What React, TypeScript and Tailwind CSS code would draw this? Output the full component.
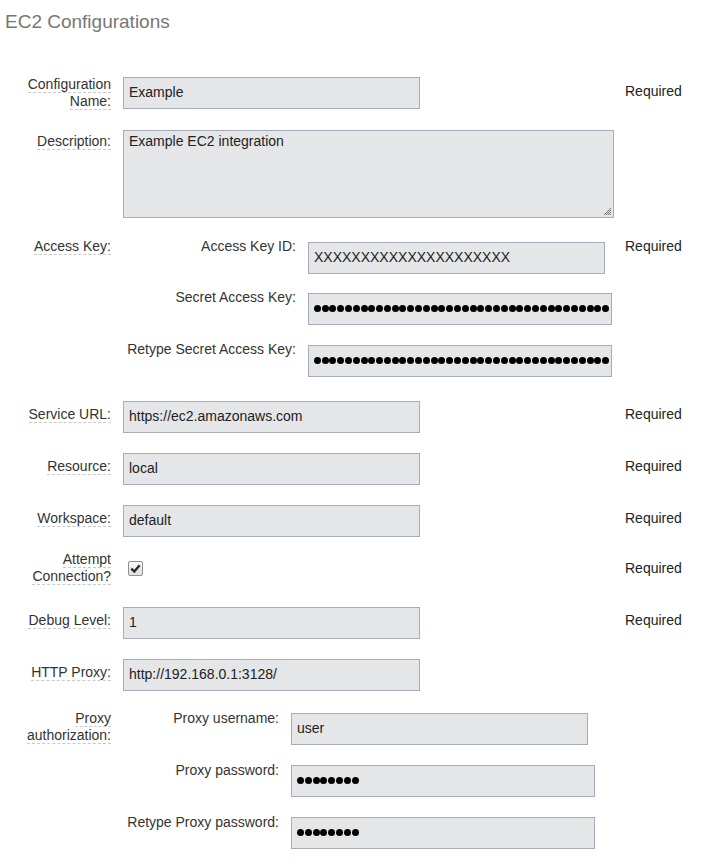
import React from "react";

// label text with dashed underline, one span per line
function Label({ lines }: { lines: string[] }) {
  return (
    <div className="w-[111px] shrink-0 text-right">
      {lines.map((l, i) => (
        <React.Fragment key={l}>
          <span className="border-b border-dashed border-[#c9c9c9]">{l}</span>
          {i < lines.length - 1 && <br />}
        </React.Fragment>
      ))}
    </div>
  );
}

function TextField({ value, width = "w-[297px]" }: { value: string; width?: string }) {
  return (
    <input
      readOnly
      defaultValue={value}
      className={`${width} h-[32px] shrink-0 border border-[#a6acbd] bg-[#e5e6e8] px-[5px] pb-[3px] text-[14px] text-[#222] outline-none`}
    />
  );
}

function PasswordField({ count, fill }: { count: number; fill?: boolean }) {
  return (
    <div className="flex h-[32px] w-[304px] shrink-0 items-center border border-[#a6acbd] bg-[#e5e6e8] pb-[1px] pl-[4px] pr-[1px]">
      <div className={`flex h-[8px] w-full overflow-hidden ${fill ? "justify-end" : "justify-start pl-[1px]"}`}>
        {Array.from({ length: count }).map((_, i) => (
          <span key={i} className="mr-[0.8px] h-[7px] w-[7px] shrink-0 self-center rounded-full bg-black" />
        ))}
      </div>
    </div>
  );
}

function Required({ className = "" }: { className?: string }) {
  return <div className={`ml-[12px] text-[#222] ${className}`}>Required</div>;
}

export default function App() {
  return (
    <div className="w-[702px] bg-white text-[14px] leading-[17px] text-[#333] font-['Liberation_Sans',Arial,sans-serif]">
      <h1 className="pl-[5px] pt-[8px] text-[19px] font-normal leading-[27px] text-[#777]">EC2 Configurations</h1>

      {/* Configuration Name */}
      <div className="mt-[41px] flex items-center">
        <Label lines={["Configuration", "Name:"]} />
        <div className="ml-[12px] w-[490px]">
          <TextField value="Example" />
        </div>
        <Required className="mb-[4px]" />
      </div>

      {/* Description */}
      <div className="mt-[20px] flex items-start">
        <div className="pt-[3px]">
          <Label lines={["Description:"]} />
        </div>
        <div className="relative ml-[12px] h-[88px] w-[491px] border border-[#a6acbd] bg-[#e5e6e8] px-[5px] pt-[2px] text-[#222]">
          Example EC2 integration
          <svg className="absolute bottom-[1px] right-[1px]" width="10" height="10" viewBox="0 0 10 10">
            <path d="M9 2 L2 9 M9 4 L4 9 M9 6 L6 9 M9 8 L8 9" stroke="#777" strokeWidth="1" />
          </svg>
        </div>
      </div>

      {/* Access Key */}
      <div className="mt-[20px] flex items-start">
        <Label lines={["Access Key:"]} />
        <div className="ml-[12px] flex w-[490px] flex-col">
          <div className="flex items-start">
            <div className="w-[173px] shrink-0 text-right">Access Key ID:</div>
            <div className="ml-[12px] mt-[4px]">
              <TextField value="XXXXXXXXXXXXXXXXXXXXX" />
            </div>
          </div>
          <div className="mt-[15px] flex items-start">
            <div className="w-[173px] shrink-0 text-right">Secret Access Key:</div>
            <div className="ml-[12px] mt-[4px]">
              <PasswordField count={60} fill />
            </div>
          </div>
          <div className="mt-[16px] flex items-start">
            <div className="w-[173px] shrink-0 text-right">Retype Secret Access Key:</div>
            <div className="ml-[12px] mt-[4px]">
              <PasswordField count={60} fill />
            </div>
          </div>
        </div>
        <Required />
      </div>

      {/* Service URL / Resource / Workspace */}
      {[
        ["Service URL:", "https://ec2.amazonaws.com", "mt-[24px]"],
        ["Resource:", "local", "mt-[20px]"],
        ["Workspace:", "default", "mt-[20px]"],
      ].map(([label, value, mt]) => (
        <div key={label} className={`${mt} flex items-start`}>
          <div className="pt-[5px]">
            <Label lines={[label]} />
          </div>
          <div className="ml-[12px] w-[490px]">
            <TextField value={value} />
          </div>
          <Required className="pt-[5px]" />
        </div>
      ))}

      {/* Attempt Connection */}
      <div className="mt-[14px] flex items-center">
        <Label lines={["Attempt", "Connection?"]} />
        <div className="ml-[12px] w-[490px] pl-[5px]">
          <span className="flex h-[15px] w-[15px] items-center justify-center rounded-[2px] border border-[#8f8f8f] bg-gradient-to-b from-[#fafafa] to-[#e0e0e0]">
            <svg width="11" height="11" viewBox="0 0 11 11">
              <path d="M1.3 5.6 L4.3 8.6 L9.7 2.2" fill="none" stroke="#2b2b2b" strokeWidth="2.4" />
            </svg>
          </span>
        </div>
        <Required />
      </div>

      {/* Debug Level */}
      <div className="mt-[22px] flex items-start">
        <div className="pt-[5px]">
          <Label lines={["Debug Level:"]} />
        </div>
        <div className="ml-[12px] w-[490px]">
          <TextField value="1" />
        </div>
        <Required className="pt-[5px]" />
      </div>

      {/* HTTP Proxy */}
      <div className="mt-[20px] flex items-start">
        <div className="pt-[5px]">
          <Label lines={["HTTP Proxy:"]} />
        </div>
        <div className="ml-[12px] w-[490px]">
          <TextField value="http://192.168.0.1:3128/" />
        </div>
      </div>

      {/* Proxy authorization */}
      <div className="mt-[19px] flex items-start pb-[17px]">
        <Label lines={["Proxy", "authorization:"]} />
        <div className="ml-[12px] flex w-[490px] flex-col">
          <div className="flex items-start">
            <div className="w-[156px] shrink-0 text-right">Proxy username:</div>
            <div className="ml-[12px] mt-[3px]">
              <TextField value="user" />
            </div>
          </div>
          <div className="mt-[17px] flex items-start">
            <div className="w-[156px] shrink-0 text-right">Proxy password:</div>
            <div className="ml-[12px] mt-[3px]">
              <PasswordField count={8} />
            </div>
          </div>
          <div className="mt-[17px] flex items-start">
            <div className="w-[156px] shrink-0 text-right">Retype Proxy password:</div>
            <div className="ml-[12px] mt-[3px]">
              <PasswordField count={8} />
            </div>
          </div>
        </div>
      </div>
    </div>
  );
}
